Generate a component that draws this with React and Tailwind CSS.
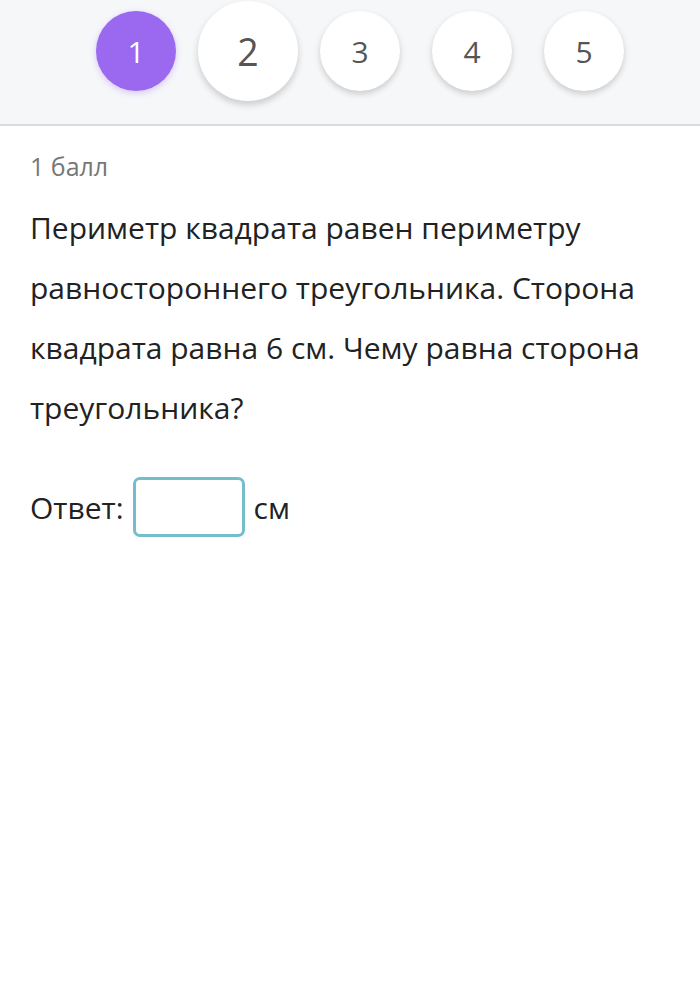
const steps = [1, 2, 3, 4, 5];

const App = () => {
  const current = 1;
  const focused = 2;

  return (
    <div
      className="w-[700px] min-h-[1006px] bg-white"
      style={{ fontFamily: '"Open Sans", "Noto Sans", sans-serif' }}
    >
      {/* Step bar */}
      <div className="h-[126px] bg-[#f6f7f9] border-b-2 border-[#dadbdd]">
        <div className="flex gap-[32px] pl-[96px] pt-[11px]">
          {steps.map((n) => (
            <div
              key={n}
              className={`w-[80px] h-[80px] rounded-full flex items-center justify-center text-[30px] ${
                n === current
                  ? "bg-[#9a69ef] text-white shadow-[0_2px_6px_rgba(154,105,239,0.35)]"
                  : "bg-white text-[#555] shadow-[0_3px_6px_rgba(0,0,0,0.18)]"
              } ${n === focused ? "scale-125" : ""}`}
            >
              {n}
            </div>
          ))}
        </div>
      </div>

      {/* Task */}
      <div className="px-[30px] pt-[24px]">
        <p className="text-[25px] leading-[32px] text-[#777]">1 балл</p>
        <p className="mt-[16px] text-[30px] leading-[60px] text-[#222]">
          Периметр квадрата равен периметру равностороннего треугольника.
          Сторона квадрата равна 6 см. Чему равна сторона треугольника?
        </p>
        <div className="mt-[39px] flex items-center gap-[9px] text-[30px] text-[#222]">
          <span>Ответ:</span>
          <input
            type="text"
            className="w-[112px] h-[60px] rounded-[7px] border-[3px] border-[#73bdcd] outline-none bg-white"
          />
          <span>см</span>
        </div>
      </div>
    </div>
  );
};

export default App;
